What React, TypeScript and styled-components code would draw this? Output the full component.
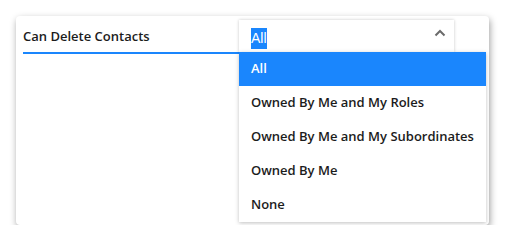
import React from "react";
import styled, { createGlobalStyle } from "styled-components";

const GlobalStyle = createGlobalStyle`
  body {
    margin: 0;
    background: #ffffff;
    font-family: "Open Sans", "Noto Sans", sans-serif;
  }
`;

const Page = styled.div`
  padding: 16px 0 0 16px;
`;

const Card = styled.div`
  width: 473px;
  height: 209px;
  box-sizing: border-box;
  background: #fff;
  border-radius: 4px;
  box-shadow: 1px 3px 7px rgba(0, 0, 0, 0.38);
  padding: 4px 0 0 7px;
`;

const Row = styled.div`
  display: flex;
  position: relative;
  height: 33px;
`;

const Label = styled.div`
  width: 216px;
  height: 32px;
  display: flex;
  align-items: center;
  border-bottom: 2px solid #1a86fd;
  font-size: 13px;
  font-weight: 600;
  color: #1c1c1c;
`;

const Select = styled.div`
  position: relative;
  width: 215px;
  height: 32px;
  box-sizing: border-box;
  display: flex;
  align-items: center;
  justify-content: space-between;
  padding: 0 8px 0 12px;
  box-shadow: 0 0 3px rgba(0, 0, 0, 0.22);
`;

const Value = styled.span`
  font-family: "Liberation Sans", Arial, sans-serif;
  font-size: 14px;
  line-height: 21px;
  margin-top: 4px;
  color: #fff;
  background: #1a86fd;
`;

const Chevron = styled.svg`
  width: 12px;
  height: 8px;
  margin-top: -6px;
`;

const Menu = styled.ul`
  position: absolute;
  top: 32px;
  left: 216px;
  width: 247px;
  margin: 0;
  padding: 0;
  list-style: none;
  background: #fff;
  box-shadow: 0 1px 4px rgba(0, 0, 0, 0.25);
  z-index: 2;
`;

const Option = styled.li<{ active?: boolean }>`
  height: 34px;
  box-sizing: border-box;
  display: flex;
  align-items: center;
  padding: 0 0 2px 12px;
  font-size: 13px;
  font-weight: 600;
  color: ${(p) => (p.active ? "#fff" : "#1c1c1c")};
  background: ${(p) => (p.active ? "#1a86fd" : "transparent")};
`;

const options = [
  "All",
  "Owned By Me and My Roles",
  "Owned By Me and My Subordinates",
  "Owned By Me",
  "None",
];

export default function App() {
  return (
    <>
      <GlobalStyle />
      <Page>
        <Card>
          <Row>
            <Label>Can Delete Contacts</Label>
            <Select>
              <Value>All</Value>
              <Chevron viewBox="0 0 12 8">
                <path
                  d="M1.5 6.5 L6 2 L10.5 6.5"
                  fill="none"
                  stroke="#6b6b6b"
                  strokeWidth="2"
                />
              </Chevron>
            </Select>
            <Menu>
              {options.map((o, i) => (
                <Option key={o} active={i === 0}>
                  {o}
                </Option>
              ))}
            </Menu>
          </Row>
        </Card>
      </Page>
    </>
  );
}
